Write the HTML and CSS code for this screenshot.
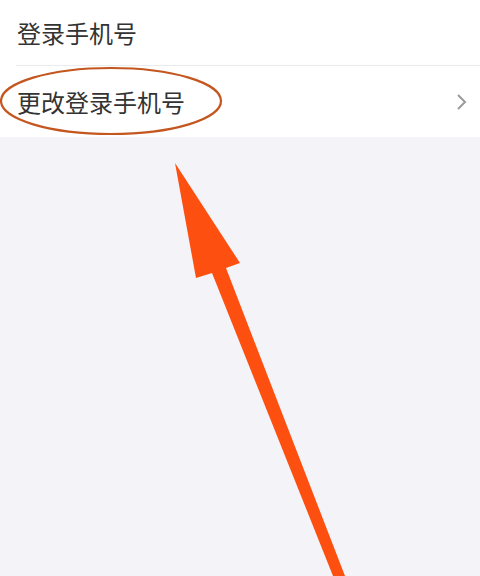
FILE: index.html
```html
<!DOCTYPE html>
<html lang="zh-CN">
<head>
  <meta charset="UTF-8" />
  <meta name="viewport" content="width=device-width, initial-scale=1.0" />
  <title>账号与安全</title>
  <link rel="stylesheet" href="styles.css">
</head>
<body>
  <div class="page">
    <div class="list">
      <div class="item item-first">
        <span class="item-title">登录手机号</span>
      </div>
      <div class="item item-link">
        <span class="item-title">更改登录手机号</span>
        <svg class="chevron" width="12" height="18" viewBox="0 0 12 18">
          <path d="M2 2 L9 9 L2 16" fill="none" stroke="#9a9a9a" stroke-width="2" />
        </svg>
      </div>
    </div>

    <!-- 标注：圈出入口并用箭头指向 -->
    <svg class="mark" width="480" height="576" viewBox="0 0 480 576">
      <ellipse cx="111" cy="101" rx="110" ry="33" fill="none" stroke="#c4561f" stroke-width="2.2" />
      <polygon fill="#fd4f10"
        points="175,163 240,263 226,268 345,576 333,576 212,273 196,278" />
    </svg>
  </div>
</body>
</html>
```

FILE: styles.css
```css
body {
  margin: 0;
  background: #f4f3f7;
  font-family: "Noto Sans CJK SC", "Noto Sans", sans-serif;
  color: #333;
}

.page {
  position: relative;
  width: 480px;
  height: 576px;
  overflow: hidden;
}

.list {
  background: #fff;
}

.item {
  display: flex;
  align-items: center;
  justify-content: space-between;
  padding: 0 12px 0 17px;
}

.item-first {
  height: 66px;
  position: relative;
}

.item-first::after {
  content: "";
  position: absolute;
  left: 16px;
  right: 0;
  bottom: 0;
  height: 1px;
  background: #ebebeb;
}

.item-link {
  height: 71px;
  padding-top: 1px;
  box-sizing: border-box;
}

.item-title {
  font-size: 24px;
  line-height: 1;
}

.chevron {
  display: block;
}

.mark {
  position: absolute;
  left: 0;
  top: 0;
  pointer-events: none;
}
```
